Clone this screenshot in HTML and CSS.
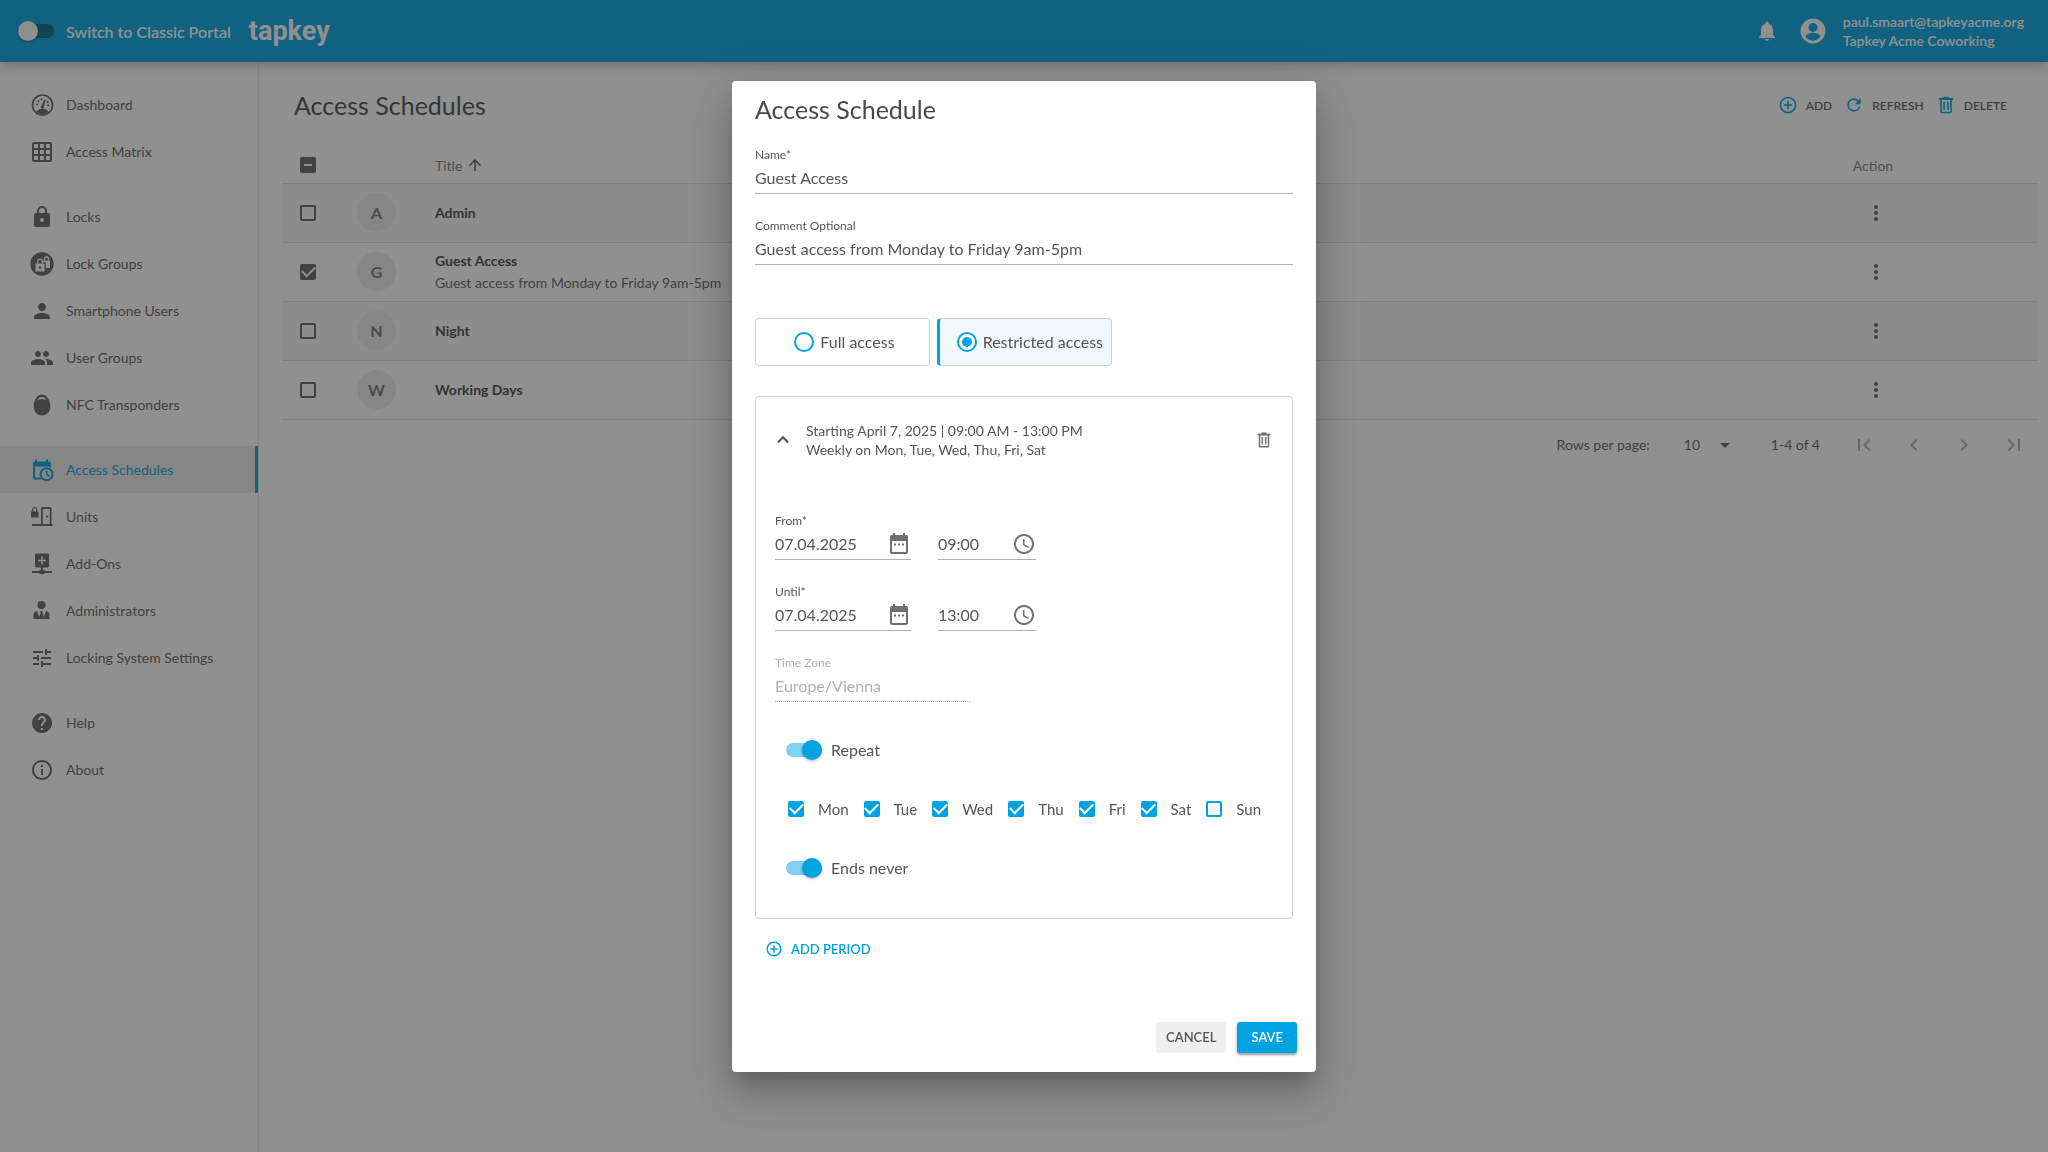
FILE: index.html
```html
<!DOCTYPE html>
<html lang="en">
<head>
    <meta charset="utf-8">
    <title>Access Schedules</title>
    <link rel="stylesheet" href="styles.css">
</head>
<body>
    <!-- shared icons -->
    <svg class="sprite" aria-hidden="true">
        <symbol id="i-more" viewBox="0 0 24 24"><path d="M12 8c1.100 0 2-.9 2-2s-.9-2-2-2-2 .9-2 2 .9 2 2 2zm0 2c-1.100 0-2 .9-2 2s.9 2 2 2 2-.9 2-2-.9-2-2-2zm0 6c-1.100 0-2 .9-2 2s.9 2 2 2 2-.9 2-2-.9-2-2-2z"/></symbol>
        <symbol id="i-add" viewBox="0 0 24 24"><path d="M13 7h-2v4H7v2h4v4h2v-4h4v-2h-4V7zm-1-5C6.480 2 2 6.480 2 12s4.480 10 10 10 10-4.480 10-10S17.520 2 12 2zm0 18c-4.410 0-8-3.590-8-8s3.590-8 8-8 8 3.590 8 8-3.590 8-8 8z"/></symbol>
        <symbol id="i-trash" viewBox="0 0 24 24"><path fill-rule="evenodd" d="M9 2h6l1 1.500h4.500v2.500H19v14c0 1.100-.9 2-2 2H7c-1.100 0-2-.9-2-2V6H3.500V3.500H8zM7 6v14h10V6zM8.800 8h1.900v10H8.800zM13.300 8h1.900v10h-1.900z"/></symbol>
        <symbol id="i-calendar" viewBox="0 0 24 24"><path fill-rule="evenodd" d="M19 3h-1V1h-2v2H8V1H6v2H5c-1.100 0-2 .9-2 2v15c0 1.100.9 2 2 2h14c1.100 0 2-.9 2-2V5c0-1.100-.9-2-2-2zm0 17H5V9h14zM7 11.500h2v2H7zm4 0h2v2h-2zm4 0h2v2h-2z"/></symbol>
        <symbol id="i-clock" viewBox="0 0 24 24"><path d="M11.990 2C6.470 2 2 6.480 2 12s4.470 10 9.990 10C17.520 22 22 17.520 22 12S17.520 2 11.990 2zM12 20c-4.420 0-8-3.580-8-8s3.580-8 8-8 8 3.580 8 8-3.580 8-8 8zm.5-13H11v6l5.250 3.150.75-1.230-4.500-2.670z"/></symbol>
    </svg>

    <header class="topbar">
        <label class="portal-switch">
            <input type="checkbox" class="switch">
            <span>Switch to Classic Portal</span>
        </label>
        <a href="#" class="logo">tapkey</a>
        <div class="account">
            <button type="button" class="icon-btn" aria-label="Notifications">
                <svg class="icon" viewBox="0 0 24 24"><path d="M12 22c1.100 0 2-.9 2-2h-4c0 1.100.9 2 2 2zm6-6v-5c0-3.070-1.630-5.640-4.500-6.320V4c0-.83-.67-1.500-1.500-1.500s-1.500.67-1.500 1.500v.68C7.640 5.360 6 7.920 6 11v5l-2 2v1h16v-1l-2-2z"/></svg>
            </button>
            <button type="button" class="icon-btn" aria-label="Account">
                <svg class="icon icon-lg" viewBox="0 0 24 24"><path fill-rule="evenodd" d="M12 2C6.480 2 2 6.480 2 12s4.480 10 10 10 10-4.480 10-10S17.520 2 12 2zm0 3.500a3.600 3.600 0 1 1 0 7.200 3.600 3.600 0 0 1 0-7.200zm0 14.200c-2.500 0-4.710-1.280-6-3.220.03-1.990 4-3.080 6-3.080s5.970 1.090 6 3.080A7.200 7.200 0 0 1 12 19.700z"/></svg>
            </button>
            <div class="account-text">
                <span>paul.smaart@tapkeyacme.org</span>
                <span>Tapkey Acme Coworking</span>
            </div>
        </div>
    </header>

    <div class="layout">
        <nav class="sidebar">
            <div class="nav-group">
                <a href="#" class="nav-item">
                    <svg class="icon" viewBox="0 0 24 24"><circle cx="12.500" cy="12" r="10" fill="none" stroke="currentColor" stroke-width="1.600"/><path d="M6.500 18.500c1.500-2 3.500-2.700 6-2.700s4.500.7 6 2.700c-1.500 1.800-3.700 2.800-6 2.800s-4.500-1-6-2.800zM14.300 6.500l1.500.5-2 6.500a1.600 1.600 0 1 1-2-.9z"/><circle cx="7" cy="11.500" r="1"/><circle cx="8.500" cy="8.200" r="1"/><circle cx="11.500" cy="6.300" r="1"/><circle cx="17.700" cy="9" r="1"/><circle cx="18.200" cy="12.300" r="1"/></svg>
                    Dashboard
                </a>
                <a href="#" class="nav-item">
                    <svg class="icon" viewBox="0 0 24 24"><path d="M20 2H4c-1.100 0-2 .9-2 2v16c0 1.100.9 2 2 2h16c1.100 0 2-.9 2-2V4c0-1.100-.9-2-2-2zM8 20H4v-4h4v4zm0-6H4v-4h4v4zm0-6H4V4h4v4zm6 12h-4v-4h4v4zm0-6h-4v-4h4v4zm0-6h-4V4h4v4zm6 12h-4v-4h4v4zm0-6h-4v-4h4v4zm0-6h-4V4h4v4z"/></svg>
                    Access Matrix
                </a>
            </div>
            <div class="nav-group">
                <a href="#" class="nav-item">
                    <svg class="icon" viewBox="0 0 24 24"><path d="M18 8h-1V6c0-2.760-2.240-5-5-5S7 3.240 7 6v2H6c-1.100 0-2 .9-2 2v10c0 1.100.9 2 2 2h12c1.100 0 2-.9 2-2V10c0-1.100-.9-2-2-2zm-6 9c-1.100 0-2-.9-2-2s.9-2 2-2 2 .9 2 2-.9 2-2 2zm3.100-9H8.900V6c0-1.710 1.390-3.100 3.100-3.100 1.710 0 3.100 1.390 3.100 3.100v2z"/></svg>
                    Locks
                </a>
                <a href="#" class="nav-item">
                    <svg class="icon" viewBox="0 0 24 24"><circle cx="12" cy="12" r="11.700"/><g class="cutout"><path fill-rule="evenodd" d="M5.500 11.500h9v8h-9zM10 14.200a1.300 1.300 0 1 0 0 2.600 1.300 1.300 0 0 0 0-2.600z"/><path d="M13 8.500h7v7.500h-4.200v-5.700H13z"/><path d="M7.700 11.500V9.500a2.300 2.300 0 0 1 4.600 0v2M14.500 8.500V7a2 2 0 0 1 4 0v1.500" fill="none" stroke-width="1.300"/></g></svg>
                    Lock Groups
                </a>
                <a href="#" class="nav-item">
                    <svg class="icon" viewBox="0 0 24 24"><path d="M12 12c2.210 0 4-1.790 4-4s-1.790-4-4-4-4 1.790-4 4 1.790 4 4 4zm0 2c-2.670 0-8 1.340-8 4v2h16v-2c0-2.660-5.330-4-8-4z"/></svg>
                    Smartphone Users
                </a>
                <a href="#" class="nav-item">
                    <svg class="icon" viewBox="0 0 24 24"><path d="M16 11c1.660 0 2.990-1.340 2.990-3S17.660 5 16 5c-1.660 0-3 1.340-3 3s1.340 3 3 3zm-8 0c1.660 0 2.990-1.340 2.990-3S9.660 5 8 5C6.340 5 5 6.340 5 8s1.340 3 3 3zm0 2c-2.330 0-7 1.170-7 3.500V19h14v-2.500c0-2.330-4.670-3.500-7-3.500zm8 0c-.29 0-.62.020-.97.050 1.160.84 1.970 1.970 1.970 3.450V19h6v-2.500c0-2.330-4.670-3.500-7-3.500z"/></svg>
                    User Groups
                </a>
                <a href="#" class="nav-item">
                    <svg class="icon" viewBox="0 0 24 24"><path fill-rule="evenodd" d="M12 1.500c4.500 0 8.300 5.500 8.300 11.500S16.800 22.500 12 22.500 3.700 19 3.700 13 7.500 1.500 12 1.500zM7.200 7.500c3-2 6.600-2 9.600 0C15.500 5 13.900 3.700 12 3.700S8.500 5 7.200 7.500z"/></svg>
                    NFC Transponders
                </a>
            </div>
            <div class="nav-group">
                <a href="#" class="nav-item active">
                    <svg class="icon" viewBox="0 0 24 24"><path d="M5 1.500h2v2h9v-2h2v2h1c1.100 0 2 .9 2 2V10a7 7 0 0 0-2-.7V8.500H5v11h5.300c.3.700.7 1.400 1.200 2H5c-1.100 0-2-.9-2-2v-14c0-1.100.9-2 2-2z"/><circle cx="16.500" cy="16.300" r="6" fill="none" stroke="currentColor" stroke-width="2"/><path d="M16 12.500h1.500v3.700l2.700 1.600-.8 1.200-3.400-2z"/></svg>
                    Access Schedules
                </a>
                <a href="#" class="nav-item">
                    <svg class="icon" viewBox="0 0 24 24"><path fill-rule="evenodd" d="M1 6.500h7.500v6H1zM11 3.500c0-.8.700-1.500 1.500-1.500H20c.8 0 1.500.7 1.500 1.500V19h1v2H2v-2h9zM12.800 4v15h7V4zM16.200 10.500h2v2h-2z"/><path d="M2.700 6.500V4.500a2 2 0 0 1 4 0v2" fill="none" stroke="currentColor" stroke-width="1.200"/></svg>
                    Units
                </a>
                <a href="#" class="nav-item">
                    <svg class="icon" viewBox="0 0 24 24"><path fill-rule="evenodd" d="M6.500 1.500h11c.8 0 1.500.7 1.500 1.500v11c0 .8-.7 1.500-1.500 1.500H13V18h1l1 1h7v2h-7l-1 1h-4l-1-1H2v-2h7l1-1h1v-2.500H6.500C5.700 15.500 5 14.800 5 14V3c0-.8.700-1.500 1.500-1.500zM11.200 4.500v3.200H8v1.600h3.200v3.200h1.600V9.300H16V7.700h-3.200V4.500z"/></svg>
                    Add-Ons
                </a>
                <a href="#" class="nav-item">
                    <svg class="icon" viewBox="0 0 24 24"><circle cx="11.500" cy="6" r="4"/><path fill-rule="evenodd" d="M7 12l2.200 6 1.500-4.500L10 12h3l-.7 1.500 1.500 4.500L16 12c2.200.3 3.500 2 3.500 4v4h-16v-4c0-2 1.300-3.700 3.500-4z"/></svg>
                    Administrators
                </a>
                <a href="#" class="nav-item">
                    <svg class="icon" viewBox="0 0 24 24"><path d="M3 17v2h6v-2H3zM3 5v2h10V5H3zm10 16v-2h8v-2h-8v-2h-2v6h2zM7 9v2H3v2h4v2h2V9H7zm14 4v-2H11v2h10zm-6-4h2V7h4V5h-4V3h-2v6z"/></svg>
                    Locking System Settings
                </a>
            </div>
            <div class="nav-group">
                <a href="#" class="nav-item">
                    <svg class="icon" viewBox="0 0 24 24"><path d="M12 2C6.480 2 2 6.480 2 12s4.480 10 10 10 10-4.480 10-10S17.520 2 12 2zm1 17h-2v-2h2v2zm2.070-7.750l-.9.920C13.450 12.900 13 13.500 13 15h-2v-.5c0-1.100.45-2.100 1.170-2.830l1.240-1.260c.37-.36.590-.86.590-1.410 0-1.100-.9-2-2-2s-2 .9-2 2H8c0-2.210 1.790-4 4-4s4 1.790 4 4c0 .88-.36 1.680-.93 2.250z"/></svg>
                    Help
                </a>
                <a href="#" class="nav-item">
                    <svg class="icon" viewBox="0 0 24 24"><path d="M11 17h2v-6h-2v6zm1-15C6.480 2 2 6.480 2 12s4.480 10 10 10 10-4.480 10-10S17.520 2 12 2zm0 18c-4.410 0-8-3.590-8-8s3.590-8 8-8 8 3.590 8 8-3.590 8-8 8zM11 9h2V7h-2v2z"/></svg>
                    About
                </a>
            </div>
        </nav>

        <main class="content">
            <div class="content-head">
                <h1>Access Schedules</h1>
                <div class="toolbar">
                    <button type="button"><svg class="icon icon-sm"><use href="#i-add"/></svg>ADD</button>
                    <button type="button"><svg class="icon icon-sm" viewBox="0 0 24 24"><path d="M17.650 6.350A7.960 7.960 0 0 0 12 4a8 8 0 1 0 7.730 10h-2.080A6 6 0 1 1 12 6c1.660 0 3.140.69 4.220 1.780L13 11h7V4z"/></svg>REFRESH</button>
                    <button type="button"><svg class="icon icon-sm"><use href="#i-trash"/></svg>DELETE</button>
                </div>
            </div>

            <table class="schedules">
                <thead>
                    <tr>
                        <th class="col-check"><input type="checkbox" class="check mixed" aria-label="Select all"></th>
                        <th class="col-avatar"></th>
                        <th>
                            <span class="sort">Title
                                <svg class="icon icon-xs" viewBox="0 0 24 24"><path d="M4 12l1.400 1.400L11 7.800V20h2V7.800l5.600 5.600L20 12l-8-8z"/></svg>
                            </span>
                        </th>
                        <th class="col-action">Action</th>
                    </tr>
                </thead>
                <tbody>
                    <tr>
                        <td class="col-check"><input type="checkbox" class="check" aria-label="Select Admin"></td>
                        <td class="col-avatar"><span class="avatar">A</span></td>
                        <td><strong>Admin</strong></td>
                        <td class="col-action"><button type="button" class="icon-btn" aria-label="Actions"><svg class="icon"><use href="#i-more"/></svg></button></td>
                    </tr>
                    <tr>
                        <td class="col-check"><input type="checkbox" class="check" aria-label="Select Guest Access" checked></td>
                        <td class="col-avatar"><span class="avatar">G</span></td>
                        <td><strong>Guest Access</strong><span class="note">Guest access from Monday to Friday 9am-5pm</span></td>
                        <td class="col-action"><button type="button" class="icon-btn" aria-label="Actions"><svg class="icon"><use href="#i-more"/></svg></button></td>
                    </tr>
                    <tr>
                        <td class="col-check"><input type="checkbox" class="check" aria-label="Select Night"></td>
                        <td class="col-avatar"><span class="avatar">N</span></td>
                        <td><strong>Night</strong></td>
                        <td class="col-action"><button type="button" class="icon-btn" aria-label="Actions"><svg class="icon"><use href="#i-more"/></svg></button></td>
                    </tr>
                    <tr>
                        <td class="col-check"><input type="checkbox" class="check" aria-label="Select Working Days"></td>
                        <td class="col-avatar"><span class="avatar">W</span></td>
                        <td><strong>Working Days</strong></td>
                        <td class="col-action"><button type="button" class="icon-btn" aria-label="Actions"><svg class="icon"><use href="#i-more"/></svg></button></td>
                    </tr>
                </tbody>
            </table>

            <div class="pagination">
                <label for="rows">Rows per page:</label>
                <div class="rows-select">
                    <select id="rows"><option>10</option><option>25</option><option>50</option></select>
                    <svg class="icon" viewBox="0 0 24 24"><path d="M7 10l5 5 5-5z"/></svg>
                </div>
                <span class="range">1-4 of 4</span>
                <div class="pager">
                    <button type="button" class="icon-btn" aria-label="First page" disabled><svg class="icon" viewBox="0 0 24 24"><path d="M18.410 16.590L13.820 12l4.590-4.590L17 6l-6 6 6 6zM6 6h2v12H6z"/></svg></button>
                    <button type="button" class="icon-btn" aria-label="Previous page" disabled><svg class="icon" viewBox="0 0 24 24"><path d="M15.410 7.410L14 6l-6 6 6 6 1.410-1.410L10.830 12z"/></svg></button>
                    <button type="button" class="icon-btn" aria-label="Next page" disabled><svg class="icon" viewBox="0 0 24 24"><path d="M10 6L8.590 7.410 13.170 12l-4.580 4.590L10 18l6-6z"/></svg></button>
                    <button type="button" class="icon-btn" aria-label="Last page" disabled><svg class="icon" viewBox="0 0 24 24"><path d="M5.590 7.410L10.180 12l-4.590 4.590L7 18l6-6-6-6zM16 6h2v12h-2z"/></svg></button>
                </div>
            </div>
        </main>
    </div>

    <div class="backdrop">
        <form class="dialog" role="dialog" aria-labelledby="dialogTitle">
            <div class="dialog-body">
                <h2 id="dialogTitle">Access Schedule</h2>

                <div class="fields">
                    <div class="field">
                        <label for="name">Name*</label>
                        <input type="text" id="name" value="Guest Access">
                    </div>
                    <div class="field">
                        <label for="comment">Comment Optional</label>
                        <input type="text" id="comment" value="Guest access from Monday to Friday 9am-5pm">
                    </div>
                </div>

                <div class="access-type">
                    <label class="choice"><input type="radio" name="access" value="full">Full access</label>
                    <label class="choice"><input type="radio" name="access" value="restricted" checked>Restricted access</label>
                </div>

                <section class="period">
                    <div class="period-head">
                        <button type="button" class="icon-btn collapse" aria-label="Collapse"><svg class="icon icon-sm" viewBox="0 0 24 24"><path d="M12 7l-7 7 1.800 1.800L12 10.600l5.200 5.200L19 14z"/></svg></button>
                        <p>Starting April 7, 2025 | 09:00 AM - 13:00 PM<br>Weekly on Mon, Tue, Wed, Thu, Fri, Sat</p>
                        <button type="button" class="icon-btn remove" aria-label="Delete period"><svg class="icon icon-xs"><use href="#i-trash"/></svg></button>
                    </div>

                    <div class="fields">
                        <div class="when">
                            <div class="field date">
                                <label for="fromDate">From*</label>
                                <div class="with-icon">
                                    <input type="text" id="fromDate" value="07.04.2025">
                                    <button type="button" class="icon-btn" aria-label="Pick date"><svg class="icon"><use href="#i-calendar"/></svg></button>
                                </div>
                            </div>
                            <div class="field time">
                                <div class="with-icon">
                                    <input type="text" id="fromTime" value="09:00" aria-label="From time">
                                    <button type="button" class="icon-btn" aria-label="Pick time"><svg class="icon"><use href="#i-clock"/></svg></button>
                                </div>
                            </div>
                        </div>
                        <div class="when">
                            <div class="field date">
                                <label for="untilDate">Until*</label>
                                <div class="with-icon">
                                    <input type="text" id="untilDate" value="07.04.2025">
                                    <button type="button" class="icon-btn" aria-label="Pick date"><svg class="icon"><use href="#i-calendar"/></svg></button>
                                </div>
                            </div>
                            <div class="field time">
                                <div class="with-icon">
                                    <input type="text" id="untilTime" value="13:00" aria-label="Until time">
                                    <button type="button" class="icon-btn" aria-label="Pick time"><svg class="icon"><use href="#i-clock"/></svg></button>
                                </div>
                            </div>
                        </div>
                        <div class="field zone">
                            <label for="zone">Time Zone</label>
                            <input type="text" id="zone" value="Europe/Vienna" disabled>
                        </div>
                    </div>

                    <div class="repeat">
                        <label class="toggle"><input type="checkbox" class="switch" checked>Repeat</label>
                        <div class="days">
                            <label><input type="checkbox" class="check" checked>Mon</label>
                            <label><input type="checkbox" class="check" checked>Tue</label>
                            <label><input type="checkbox" class="check" checked>Wed</label>
                            <label><input type="checkbox" class="check" checked>Thu</label>
                            <label><input type="checkbox" class="check" checked>Fri</label>
                            <label><input type="checkbox" class="check" checked>Sat</label>
                            <label><input type="checkbox" class="check">Sun</label>
                        </div>
                        <label class="toggle"><input type="checkbox" class="switch" checked>Ends never</label>
                    </div>
                </section>

                <button type="button" class="add-period"><svg class="icon icon-xs"><use href="#i-add"/></svg>ADD PERIOD</button>
            </div>

            <div class="dialog-actions">
                <button type="button" class="btn">CANCEL</button>
                <button type="submit" class="btn btn-primary">SAVE</button>
            </div>
        </form>
    </div>
</body>
</html>
```

FILE: styles.css
```css
* {
    box-sizing: border-box;
}

body {
    margin: 0;
    font-family: Lato, "Open Sans", sans-serif;
    font-size: 14px;
    color: #5f5f5f;
    background-color: #fff;
}

button,
input,
select {
    font-family: inherit;
    color: inherit;
}

button {
    padding: 0;
    border: none;
    background: none;
    cursor: pointer;
}

.sprite {
    display: none;
}

.icon {
    width: 24px;
    height: 24px;
    flex: none;
    display: block;
    fill: currentColor;
}

.icon-lg {
    width: 30px;
    height: 30px;
}

.icon-sm {
    width: 20px;
    height: 20px;
}

.icon-xs {
    width: 18px;
    height: 18px;
}

.icon-btn {
    display: flex;
    align-items: center;
    justify-content: center;
}

/* top bar */
.topbar {
    position: relative;
    display: flex;
    align-items: center;
    height: 62px;
    padding: 0 24px 0 18px;
    color: #fff;
    background-color: #00a3e0;
    box-shadow: 0 2px 12px rgba(0, 0, 0, 0.3);
}

.portal-switch {
    display: flex;
    align-items: center;
    gap: 12px;
    font-size: 16px;
    font-weight: 600;
}

.logo {
    margin-left: 18px;
    font-family: Roboto, sans-serif;
    font-size: 27px;
    font-weight: bold;
    color: #fff;
    text-decoration: none;
}

.account {
    display: flex;
    align-items: center;
    margin-left: auto;
}

.account .icon-btn {
    margin-right: 15px;
}

.account .icon-btn + .icon-btn {
    margin: 0 15px 0 4px;
}

.account-text {
    display: flex;
    flex-direction: column;
    font-weight: 600;
    line-height: 19px;
}

/* switch */
.switch {
    appearance: none;
    display: flex;
    align-items: center;
    width: 36px;
    height: 14px;
    margin: 0;
    border-radius: 7px;
    background-color: rgba(0, 0, 0, 0.38);
}

.switch::after {
    content: "";
    width: 20px;
    height: 20px;
    flex: none;
    border-radius: 50%;
    background-color: #fafafa;
    box-shadow: 0 1px 3px rgba(0, 0, 0, 0.3);
}

.switch:checked {
    justify-content: flex-end;
    background-color: #80d1ef;
}

.switch:checked::after {
    background-color: #00a3e0;
}

/* checkbox */
.check {
    appearance: none;
    display: grid;
    place-content: center;
    flex: none;
    width: 16px;
    height: 16px;
    margin: 0;
    border: 2px solid currentColor;
    border-radius: 2px;
}

.check:checked,
.check.mixed {
    background-color: currentColor;
}

.check:checked::after {
    content: "";
    width: 11px;
    height: 6px;
    margin-bottom: 3px;
    border: solid #fff;
    border-width: 0 0 2px 2px;
    transform: rotate(-45deg);
}

.check.mixed::after {
    content: "";
    width: 8px;
    height: 2px;
    background-color: #fff;
}

/* layout */
.layout {
    display: flex;
    min-height: calc(100vh - 62px);
}

.sidebar {
    display: flex;
    flex-direction: column;
    gap: 18px;
    width: 259px;
    flex: none;
    padding-top: 19px;
    border-right: 1px solid #e4e4e4;
}

.nav-item {
    display: flex;
    align-items: center;
    gap: 12px;
    height: 47px;
    padding-left: 30px;
    border-right: 3px solid transparent;
    color: #606060;
    text-decoration: none;
}

.nav-item.active {
    border-right-color: #00a3e0;
    color: #00a3e0;
    background-color: #eaeaea;
}

.cutout {
    fill: #fff;
    stroke: #fff;
    stroke-width: 0;
}

.content {
    flex: 1;
    padding: 20px 10px 0 23px;
}

.content-head {
    display: flex;
    align-items: center;
    justify-content: space-between;
    height: 46px;
    padding: 0 31px 0 12px;
}

h1,
h2 {
    margin: 0;
    font-size: 25px;
    font-weight: normal;
    line-height: 32px;
    color: #484848;
}

.toolbar {
    display: flex;
    gap: 12px;
}

.toolbar button {
    display: flex;
    align-items: center;
    gap: 8px;
    font-size: 12px;
    font-weight: 600;
}

.toolbar .icon {
    color: #00a3e0;
}

/* table */
.schedules {
    width: 100%;
    border-collapse: collapse;
    margin-top: 20px;
}

.schedules th,
.schedules td {
    padding: 0;
    border-bottom: 1px solid #dedede;
    text-align: left;
}

.schedules th {
    height: 35px;
    font-weight: normal;
    color: #7c7c7c;
}

.schedules td {
    height: 59px;
    line-height: 22px;
}

.schedules tbody tr:nth-child(odd) {
    background-color: #f8f8f8;
}

.schedules .col-check {
    width: 75px;
    padding-left: 18px;
    color: #606060;
}

.schedules .col-avatar {
    width: 78px;
}

.schedules .col-action {
    width: 330px;
    text-align: center;
}

.schedules td.col-action {
    padding-left: 6px;
}

.col-action .icon-btn {
    margin: 0 auto;
}

.schedules strong {
    display: block;
    color: #444;
}

.note {
    display: block;
}

.avatar {
    display: flex;
    align-items: center;
    justify-content: center;
    width: 39px;
    height: 39px;
    border-radius: 50%;
    font-size: 16px;
    font-weight: bold;
    color: #757575;
    background-color: #ebebeb;
}

.sort {
    display: flex;
    align-items: center;
    gap: 4px;
}

.sort .icon {
    color: #555;
}

.pagination {
    display: flex;
    align-items: center;
    justify-content: flex-end;
    height: 50px;
    padding-right: 12px;
}

.rows-select {
    display: flex;
    align-items: center;
    margin: 0 34px;
}

.rows-select select {
    appearance: none;
    width: 29px;
    padding: 0;
    border: none;
    font-size: 14px;
    background: none;
}

.pager {
    display: flex;
    gap: 26px;
    margin-left: 32px;
    color: #aaa;
}

/* dialog */
.backdrop {
    position: fixed;
    inset: 0;
    display: flex;
    overflow: auto;
    background-color: rgba(33, 33, 33, 0.5);
}

.dialog {
    width: 100%;
    max-width: 584px;
    margin: auto;
    border-radius: 4px;
    color: #555;
    background-color: #fff;
    box-shadow: 0 12px 15px -7px rgba(0, 0, 0, 0.2), 0 24px 38px 3px rgba(0, 0, 0, 0.14), 0 9px 46px 8px rgba(0, 0, 0, 0.12);
}

.dialog-body {
    padding: 12px 23px 0;
}

.fields {
    display: flex;
    flex-direction: column;
    gap: 24px;
}

.field label {
    display: block;
    font-size: 12px;
    line-height: 16px;
}

.field input {
    width: 100%;
    height: 31px;
    padding: 0;
    border: none;
    border-bottom: 1px solid #b0b0b0;
    font-size: 16px;
    background: none;
}

.dialog-body > .fields {
    margin: 22px 0 53px;
}

.access-type {
    display: flex;
    gap: 7px;
}

.choice {
    display: flex;
    align-items: center;
    justify-content: center;
    gap: 6px;
    width: 175px;
    height: 48px;
    padding: 0 8px 0 12px;
    border: 1px solid #d0d0d0;
    border-radius: 4px;
    font-size: 16px;
}

.choice:has(:checked) {
    justify-content: flex-end;
    border-left: 3px solid #00a3e0;
    background-color: #f1f9fd;
}

.choice input {
    appearance: none;
    display: grid;
    place-content: center;
    width: 20px;
    height: 20px;
    margin: 0;
    border: 2px solid #00a3e0;
    border-radius: 50%;
    background-color: #fff;
}

.choice input:checked::after {
    content: "";
    width: 10px;
    height: 10px;
    border-radius: 50%;
    background-color: #00a3e0;
}

.period {
    margin-top: 30px;
    padding: 24px 19px 40px;
    border: 1px solid #d0d0d0;
    border-radius: 4px;
}

.period-head {
    display: flex;
    align-items: center;
    margin-bottom: 54px;
}

.period-head p {
    flex: 1;
    margin: 0 0 0 13px;
    line-height: 19px;
}

.collapse {
    margin-left: -2px;
}

.remove {
    color: #6e6e6e;
}

.when {
    display: flex;
    align-items: flex-end;
    gap: 27px;
}

.date {
    width: 136px;
}

.time {
    width: 98px;
}

.zone {
    width: 195px;
    color: #b0b0b0;
}

.field.zone input {
    border-bottom-style: dotted;
}

.with-icon {
    display: flex;
    align-items: center;
    border-bottom: 1px solid #b0b0b0;
}

.with-icon input {
    flex: 1;
    min-width: 0;
    height: 30px;
    border: none;
}

.with-icon .icon-btn {
    color: #707070;
}

.repeat {
    display: flex;
    flex-direction: column;
    gap: 39px;
    margin-top: 38px;
    padding-left: 11px;
    font-size: 16px;
    line-height: 20px;
}

.toggle {
    display: flex;
    align-items: center;
    gap: 9px;
}

.days {
    display: flex;
    gap: 15px;
    padding-left: 2px;
    font-size: 15px;
}

.days label {
    display: flex;
    align-items: center;
    gap: 14px;
}

.days .check {
    color: #00a3e0;
}

.add-period {
    display: flex;
    align-items: center;
    gap: 8px;
    height: 20px;
    margin: 20px 0 0 10px;
    font-size: 13px;
    font-weight: 600;
    color: #00a3e0;
}

.dialog-actions {
    display: flex;
    justify-content: flex-end;
    gap: 11px;
    padding: 63px 19px 19px;
}

.btn {
    height: 31px;
    padding: 0 10px;
    border-radius: 3px;
    font-size: 13px;
    font-weight: 600;
    background-color: #efefef;
}

.btn-primary {
    padding: 0 14px;
    color: #fff;
    background-color: #00a3e0;
    box-shadow: 0 2px 3px rgba(0, 0, 0, 0.4);
}
```
